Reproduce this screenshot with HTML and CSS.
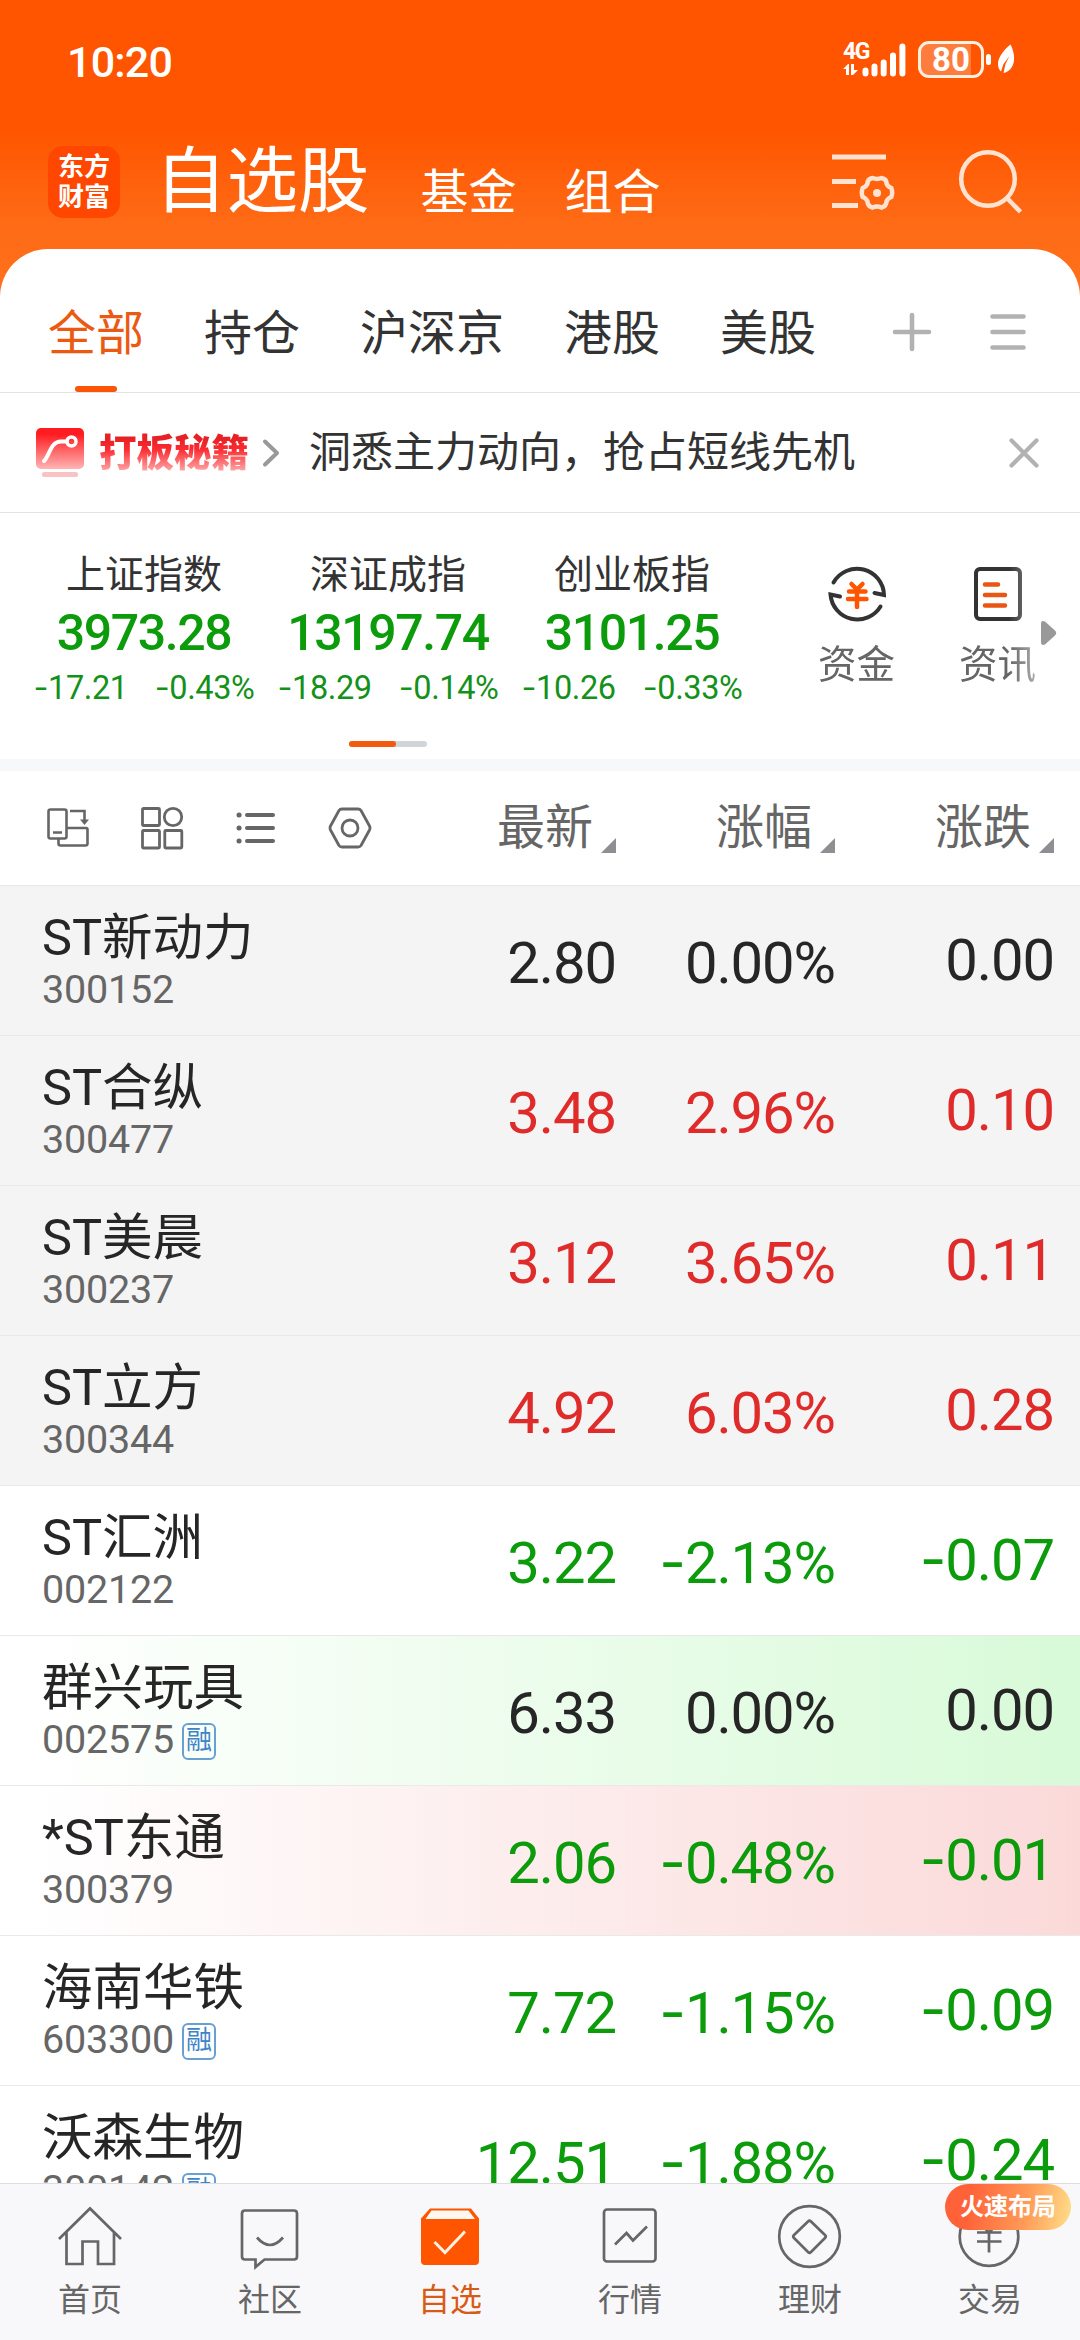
FILE: index.html
```html
<!DOCTYPE html>
<html lang="zh-CN">
<head>
<meta charset="utf-8">
<title>自选股</title>
<link rel="stylesheet" href="styles.css">
</head>
<body>
<div class="app">
  <div class="status">
    <span class="time">10:20</span>
    <div class="status-icons">
      <div class="net">
        <span class="net-type">4G</span>
        <svg width="16" height="12" viewBox="0 0 16 12" fill="#fff"><path d="M0 5 5 0h1v11H3V5zM8 0h3v6h4l-5 5H8z"/></svg>
      </div>
      <svg class="bars" width="44" height="36" viewBox="0 0 44 36" stroke="#fff" stroke-width="6" stroke-linecap="round"><path d="M3.500 28.500v3M12.500 24.500v7M21.700 20.500v11M31 13.500v18M40.400 4.500v27"/></svg>
      <div class="battery"><span>80</span></div>
      <svg class="leaf" width="30" height="36" viewBox="0 0 30 36"><rect x="0" y="13" width="5" height="11" rx="2.500" fill="#fff"/><path d="M24.500 3.500c6 11 5 26-7 28.500l2-9 4-8-6 8-2.500 7.500c-6-6-3-17 9.500-27z" fill="#fff"/></svg>
    </div>
  </div>

  <header class="top">
    <div class="logo"><span>东方</span><span>财富</span></div>
    <h1>自选股</h1>
    <span class="sub">基金</span>
    <span class="sub">组合</span>
    <svg class="manage" width="64" height="64" viewBox="0 0 64 64" fill="none" stroke="#ffe3d0" stroke-width="5"><path d="M1 7h54M1 31.500h24M1 55.500h26"/><path stroke-width="4.500" d="M41.500 28c3 1.200 6 1.200 9 0q5 1 5 5.500q1 3 4.800 4.500q1.800 5 0 9q-3.800 1.500-4.800 4.500q0 4.500-5 6q-4.500-2-9 0q-5-1.500-5-6q-1-3-4.800-4.500q-1.800-4 0-9q3.800-1.500 4.800-4.500q0-4.500 5-5.500z"/><circle cx="46" cy="43" r="4" fill="#ffe3d0" stroke="none"/></svg>
    <svg class="search" width="64" height="68" viewBox="0 0 64 68" fill="none" stroke="#ffe3d0" stroke-width="4.500"><circle cx="30" cy="31" r="26.800"/><path d="M49 50 62.500 64"/></svg>
  </header>

  <main class="sheet">
    <nav class="tabs">
      <span class="tab active">全部</span><span class="tab">持仓</span><span class="tab">沪深京</span><span class="tab">港股</span><span class="tab">美股</span>
      <svg class="plus" width="40" height="40" viewBox="0 0 40 40" stroke="#b2b2b2" stroke-width="4.600" stroke-linecap="round"><path d="M3 20h34M20 3v34"/></svg>
      <svg class="menu" width="38" height="40" viewBox="0 0 38 40" stroke="#b2b2b2" stroke-width="4.600" stroke-linecap="round"><path d="M3.500 4.500h31M3.500 20h31M3.500 35.500h31"/></svg>
    </nav>

    <section class="promo">
      <svg class="promo-icon" width="48" height="50" viewBox="0 0 48 50"><defs><linearGradient id="red" x1="0" y1="0" x2="0" y2="1"><stop offset=".15" stop-color="#ff1c20"/><stop offset="1" stop-color="#ffb5b5"/></linearGradient></defs><rect width="48" height="41" rx="5" fill="url(#red)"/><rect x="6" y="44" width="36" height="5" rx="2" fill="#f9c3c3"/><path d="M8 33c6-6 6-19 17-19.500h6" fill="none" stroke="#fff" stroke-width="4" stroke-linecap="round"/><circle cx="35.500" cy="13.500" r="4.500" fill="none" stroke="#fff" stroke-width="3.500"/></svg>
      <span class="promo-name">打板秘籍</span>
      <svg class="promo-go" width="18" height="30" viewBox="0 0 18 30" fill="none" stroke="#999" stroke-width="4" stroke-linecap="round" stroke-linejoin="round"><path d="M3 3.500 15 15 3 26.500"/></svg>
      <span class="promo-text">洞悉主力动向，抢占短线先机</span>
      <svg class="close" width="34" height="34" viewBox="0 0 34 34" stroke="#b2b2b2" stroke-width="4.200" stroke-linecap="round"><path d="M4.500 4.500 29.500 29.500M29.500 4.500 4.500 29.500"/></svg>
    </section>

    <section class="market">
      <div class="indices">
        <div class="cards">
          <div class="card"><span class="c-name">上证指数</span><b>3973.28</b><div class="c-chg"><span><i>-</i>17.21</span><span><i>-</i>0.43%</span></div></div>
          <div class="card"><span class="c-name">深证成指</span><b>13197.74</b><div class="c-chg"><span><i>-</i>18.29</span><span><i>-</i>0.14%</span></div></div>
          <div class="card"><span class="c-name">创业板指</span><b>3101.25</b><div class="c-chg"><span><i>-</i>10.26</span><span><i>-</i>0.33%</span></div></div>
        </div>
        <div class="pager"><span></span></div>
      </div>
      <div class="shortcuts">
        <div class="shortcut"><svg width="64" height="64" viewBox="0 0 64 64" fill="none" stroke="#333" stroke-width="4" stroke-linecap="round"><path d="M8.500 20.500A27 27 0 0 1 59 33l-9.500-2M55.500 44.500A27 27 0 0 1 5.500 32.500l9.500 2"/><path stroke="#ff5500" stroke-width="4.500" d="M26.500 22 32 27.500 37.500 22M24 29.500h16.500M23 37h18.500M32 29v16"/></svg><span>资金</span></div>
        <div class="shortcut"><svg width="64" height="64" viewBox="0 0 64 64" fill="none" stroke="#333" stroke-width="4" stroke-linecap="round"><rect x="10" y="7" width="44" height="50" rx="4"/><path stroke="#ea5514" stroke-width="4.500" d="M19 22.500h13M19 33h20M19 43.500h20"/></svg><span>资讯</span></div>
      </div>
      <svg class="more" width="16" height="26" viewBox="0 0 16 26" fill="#999"><path d="M0 3.500Q0 0 4 1.500L14.500 11Q16 13 14.500 15L4 24.500Q0 26 0 22z"/></svg>
    </section>

    <section class="head">
      <div class="views">
        <svg width="44" height="44" viewBox="0 0 44 44" fill="none" stroke="#666" stroke-width="2.600"><rect x="2.500" y="3.500" width="18" height="29" rx="2"/><path d="M7 26.500h9M21 22h19q1.500 0 1.500 1.500v14q0 2-2 2h-25q-2 0-2-2V33M24 5h14.500v11"/><path d="m34 13.500 4.500 5.500 4.500-5.500z" fill="#666" stroke="none"/></svg>
        <svg width="44" height="44" viewBox="0 0 44 44" fill="none" stroke="#666" stroke-width="2.800"><rect x="2.500" y="2.500" width="17" height="17" rx="1"/><circle cx="33" cy="11" r="8.700"/><rect x="2.500" y="24.500" width="17" height="17.500" rx="1"/><rect x="24.800" y="24.500" width="17" height="17.500" rx="1"/></svg>
        <svg width="44" height="44" viewBox="0 0 44 44" stroke="#666" stroke-width="4" stroke-linecap="round"><path d="M13 9h26M13 22h26M13 35h26"/><path stroke-width="5" d="M5 9h.1M5 22h.1M5 35h.1"/></svg>
        <svg width="44" height="44" viewBox="0 0 44 44" fill="none" stroke="#666" stroke-width="2.800" stroke-linejoin="round"><path d="M14 3h16q2 0 3 1.500l8.500 15.500q1 2 0 4L33 39.500Q32 41 30 41H14q-2 0-3-1.500L2.500 24q-1-2 0-4L11 4.500Q12 3 14 3z"/><circle cx="22" cy="22" r="8"/></svg>
      </div>
      <div class="col">最新<svg width="15" height="15" viewBox="0 0 15 15"><path d="M15 0v15H0z" fill="#8e8e93"/></svg></div>
      <div class="col">涨幅<svg width="15" height="15" viewBox="0 0 15 15"><path d="M15 0v15H0z" fill="#8e8e93"/></svg></div>
      <div class="col">涨跌<svg width="15" height="15" viewBox="0 0 15 15"><path d="M15 0v15H0z" fill="#8e8e93"/></svg></div>
    </section>

    <section class="list">
      <div class="row pinned"><div class="stock"><span class="name">ST新动力</span><span class="code">300152</span></div><span class="num">2.80</span><span class="num">0.00%</span><span class="num chg">0.00</span></div>
      <div class="row pinned up"><div class="stock"><span class="name">ST合纵</span><span class="code">300477</span></div><span class="num">3.48</span><span class="num">2.96%</span><span class="num chg">0.10</span></div>
      <div class="row pinned up"><div class="stock"><span class="name">ST美晨</span><span class="code">300237</span></div><span class="num">3.12</span><span class="num">3.65%</span><span class="num chg">0.11</span></div>
      <div class="row pinned up"><div class="stock"><span class="name">ST立方</span><span class="code">300344</span></div><span class="num">4.92</span><span class="num">6.03%</span><span class="num chg">0.28</span></div>
      <div class="row down"><div class="stock"><span class="name">ST汇洲</span><span class="code">002122</span></div><span class="num">3.22</span><span class="num"><i>-</i>2.13%</span><span class="num chg"><i>-</i>0.07</span></div>
      <div class="row flash-green"><div class="stock"><span class="name">群兴玩具</span><span class="code">002575<em>融</em></span></div><span class="num">6.33</span><span class="num">0.00%</span><span class="num chg">0.00</span></div>
      <div class="row down flash-red"><div class="stock"><span class="name">*ST东通</span><span class="code">300379</span></div><span class="num">2.06</span><span class="num"><i>-</i>0.48%</span><span class="num chg"><i>-</i>0.01</span></div>
      <div class="row down"><div class="stock"><span class="name">海南华铁</span><span class="code">603300<em>融</em></span></div><span class="num">7.72</span><span class="num"><i>-</i>1.15%</span><span class="num chg"><i>-</i>0.09</span></div>
      <div class="row down"><div class="stock"><span class="name">沃森生物</span><span class="code">300142<em>融</em></span></div><span class="num">12.51</span><span class="num"><i>-</i>1.88%</span><span class="num chg"><i>-</i>0.24</span></div>
    </section>
  </main>

  <nav class="dock">
    <div class="item"><svg width="68" height="68" viewBox="0 0 68 68"><path d="M3 36 34 5.500 65 36M10.500 29.500V61h16V38.500H42V61h16V29.500"/></svg><span>首页</span></div>
    <div class="item"><svg width="68" height="68" viewBox="0 0 68 68"><path d="M9 7.500h49q3 0 3 3v43q0 3-3 3H28.500L19.500 64v-7.500H9q-3 0-3-3v-43q0-3 3-3zM21 34.500q13 15 26 0"/></svg><span>社区</span></div>
    <div class="item active"><svg width="68" height="68" viewBox="0 0 68 68"><path d="M14 5.500h41l8 10V58q0 4-4 4H9q-4 0-4-4V15.500z" fill="#ff5500" stroke="none"/><path d="M15.500 7.500h37L59 16H9.500z" fill="#fff8f0" stroke="none"/><path d="M18.500 39 29 49.500 49 28.500" stroke="#fff1e0" stroke-width="3"/></svg><span>自选</span></div>
    <div class="item"><svg width="68" height="68" viewBox="0 0 68 68"><rect x="8" y="6.500" width="51.500" height="52" rx="3"/><path d="M19 41.500 30.500 30l6.500 7.500 14-14"/></svg><span>行情</span></div>
    <div class="item"><svg width="68" height="68" viewBox="0 0 68 68"><circle cx="33.500" cy="33.500" r="30.300"/><path d="M32 18.500q1.500-1.500 3 0l14 13.500q1.500 1.500 0 3L35 49q-1.500 1.500-3 0L18 35q-1.500-1.500 0-3z"/></svg><span>理财</span></div>
    <div class="item"><svg width="68" height="68" viewBox="0 0 68 68"><circle cx="33" cy="33.500" r="29.300"/><path d="M22 18 33 29.500 44 18M21 29.500h24.500M21 38.500h24.500M33 29v20.500"/></svg><span>交易</span><strong>火速布局</strong></div>
  </nav>
</div>
</body>
</html>
```
FILE: styles.css
```css
* { box-sizing: border-box; }

body {
  margin: 0;
  font-family: Roboto, "Noto Sans CJK SC", sans-serif;
  color: #262626;
}

svg { display: block; flex: none; }

.app {
  width: 1080px;
  height: 2340px;
  overflow: hidden;
  display: flex;
  flex-direction: column;
  background: linear-gradient(#ff5500 0, #ff5500 130px, #ff6b16 225px, #ff701c 300px);
}

/* status bar */
.status {
  flex: none;
  height: 115px;
  padding: 0 64px 0 67px;
  display: flex;
  justify-content: space-between;
  color: #fff;
}
.time {
  font-size: 43px;
  font-weight: 500;
  line-height: 60px;
  padding-top: 32px;
  letter-spacing: -.8px;
}
.status-icons { display: flex; padding-top: 41px; }
.net { width: 19px; white-space: nowrap; }
.net-type {
  display: block;
  font-size: 23px;
  font-weight: 700;
  line-height: 24px;
  letter-spacing: -1.500px;
  margin-top: -1px;
}
.bars { margin-top: 1px; }
.battery {
  width: 66px;
  height: 37px;
  margin: 0 2px 0 12px;
  border: 3px solid #fff0e0;
  border-radius: 11px;
  background: linear-gradient(90deg, #ff7d3c 50px, transparent 50px);
  font-size: 33px;
  font-weight: 700;
  line-height: 32px;
  text-align: center;
}

/* title bar */
.top {
  flex: none;
  height: 134px;
  padding: 0 58px 0 48px;
  display: flex;
  align-items: center;
  color: #fff;
}
.logo {
  width: 72px;
  height: 72px;
  border-radius: 15px;
  background: #ff4700;
  display: flex;
  flex-direction: column;
  justify-content: center;
  align-items: center;
  font-size: 26px;
  font-weight: 700;
  line-height: 30px;
}
.top h1 {
  margin: 0 0 0 35px;
  font-size: 71.500px;
  font-weight: 400;
  line-height: 80px;
}
.sub {
  font-size: 48px;
  line-height: 60px;
  padding-top: 21px;
  margin-left: 48px;
}
.top h1 + .sub { margin-left: 51px; }
.manage { margin-left: auto; }
.search { margin-left: 63px; }

/* white sheet */
.sheet {
  flex: 1;
  min-height: 0;
  overflow: hidden;
  background: #fff;
  border-radius: 48px 48px 0 0;
}
.tabs {
  height: 144px;
  border-bottom: 1px solid #e3e3e3;
  padding: 27px 53px 0 48px;
  display: flex;
  align-items: center;
  font-size: 48px;
  color: #333;
}
.tab { flex: none; margin-right: 60px; line-height: 116px; height: 116px; white-space: nowrap; }
.tab.active { position: relative; color: #ea5a12; }
.tab.active::after {
  content: "";
  position: absolute;
  left: 27px;
  bottom: 0;
  width: 42px;
  height: 6px;
  border-radius: 3px;
  background: #fb5608;
}
.plus { margin: -4px 0 0 16px; }
.menu { margin: -4px 0 0 auto; }

.promo {
  height: 120px;
  border-bottom: 1px solid #e3e3e3;
  padding: 0 39px 0 36px;
  display: flex;
  align-items: center;
}
.promo-name {
  margin-left: 15px;
  font-size: 37.500px;
  font-weight: 900;
  line-height: 44px;
  background: linear-gradient(#e62227 8px, #fb2a30 18px, #ffb0b0 42px);
  -webkit-background-clip: text;
  background-clip: text;
  color: transparent;
}
.promo-go { margin-left: 13px; }
.promo-text { margin-left: 29px; font-size: 42px; line-height: 60px; color: #333; }
.close { margin-left: auto; }

/* indices */
.market {
  height: 258px;
  border-bottom: 12px solid #f7f8fa;
  display: flex;
  padding-left: 22px;
}
.indices { width: 732px; padding-top: 42px; }
.cards { display: grid; grid-template-columns: repeat(3, 1fr); }
.card { display: flex; flex-direction: column; align-items: center; }
.c-name { font-size: 39px; line-height: 40px; color: #333; }
.card b {
  margin-top: 13px;
  font-size: 50px;
  font-weight: 500;
  line-height: 50px;
  letter-spacing: -1.400px;
  color: #0b9b0b;
}
.c-chg {
  display: flex;
  gap: 27px;
  margin-top: 12px;
  font-size: 32.500px;
  line-height: 36px;
  letter-spacing: -.4px;
  color: #14911a;
}
i { font-family: Inter, sans-serif; font-style: normal; line-height: 1px; }
.pager {
  width: 78px;
  height: 6px;
  margin: 35px auto 0;
  border-radius: 3px;
  background: #d1d5d8;
}
.pager span { display: block; width: 47px; height: 6px; border-radius: 3px; background: #f25a10; }
.shortcuts {
  width: 287px;
  padding: 49px 0 0 32px;
  display: flex;
  -webkit-mask-image: linear-gradient(90deg, #000 255px, rgba(0, 0, 0, .45) 287px);
  mask-image: linear-gradient(90deg, #000 255px, rgba(0, 0, 0, .45) 287px);
}
.shortcut {
  flex: none;
  width: 141px;
  display: flex;
  flex-direction: column;
  align-items: center;
  gap: 19px;
  font-size: 38.500px;
  line-height: 40px;
  color: #666;
}
.more { margin-top: 107px; }

/* quotes table */
.head, .row { display: grid; grid-template-columns: 396px 220px 219px 219px; }
.head { height: 115px; border-bottom: 1px solid #e8e8e8; }
.views { display: flex; gap: 50px; padding: 35px 0 0 46px; }
.col {
  display: flex;
  justify-content: flex-end;
  font-size: 48px;
  line-height: 60px;
  padding-top: 27px;
  color: #666;
}
.col svg { margin: 40px 0 0 8px; }
.row {
  height: 150px;
  border-bottom: 1px solid #e9e9e9;
  align-items: center;
}
.pinned { background: #f4f4f4; }
.up .num { color: #e02b2b; }
.down .num { color: #0b9b0b; }
.flash-green { background: linear-gradient(90deg, #fff 3%, #d8fad8); }
.flash-red { background: linear-gradient(90deg, #fff 3%, #fbd9d9); }
.stock { align-self: start; padding: 22px 0 0 42px; }
.name { display: block; font-size: 50.500px; line-height: 60px; white-space: nowrap; }
.code {
  display: flex;
  align-items: center;
  margin-top: 2px;
  font-size: 39.500px;
  line-height: 40px;
  letter-spacing: -.2px;
  color: #666;
}
.code em {
  width: 34px;
  height: 37px;
  margin: 1px 0 -1px 8px;
  border: 2px solid #68a0d4;
  border-radius: 6px;
  font-size: 26px;
  font-style: normal;
  line-height: 31px;
  text-align: center;
  color: #3f84c6;
}
.num {
  font-size: 58px;
  line-height: 70px;
  padding-top: 4px;
  letter-spacing: -1.100px;
  text-align: right;
  white-space: nowrap;
}
.num.chg { padding-top: 0; margin-top: -1px; }

/* bottom bar */
.dock {
  flex: none;
  height: 157px;
  border-top: 1px solid #dedee0;
  background: #f8f8fa;
  display: grid;
  grid-template-columns: repeat(6, 1fr);
}
.item {
  position: relative;
  display: flex;
  flex-direction: column;
  align-items: center;
  padding-top: 19px;
  font-size: 32px;
  line-height: 40px;
  color: #666;
}
.item svg { fill: none; stroke: #666; stroke-width: 2.700px; margin-bottom: 9px; }
.item.active { color: #d95a16; }
.item strong {
  position: absolute;
  left: 45px;
  top: 0;
  width: 126px;
  height: 46px;
  border-radius: 23px;
  background: linear-gradient(100deg, #ff6238 20%, #ff9c58 65%, #ffe08a);
  font-size: 24px;
  line-height: 47px;
  text-align: center;
  color: #fff;
}
```
